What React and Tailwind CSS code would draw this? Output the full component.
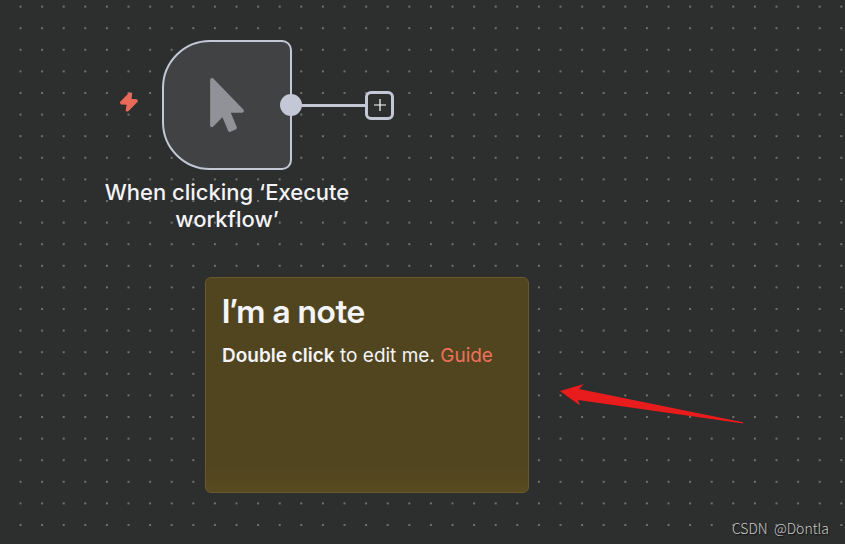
import React from 'react';
import { FaMousePointer } from 'react-icons/fa';

// Dotted grid behind everything on the canvas
const GridBackground = () => (
  <svg className="absolute inset-0 h-full w-full" aria-hidden="true">
    <defs>
      <pattern id="grid" x="9.7" y="-4.2" width="21.6" height="21.6" patternUnits="userSpaceOnUse">
        <circle cx="10.8" cy="10.8" r="0.9" fill="#8f9191" />
      </pattern>
    </defs>
    <rect width="100%" height="100%" fill="url(#grid)" />
  </svg>
);

const BoltIcon = () => (
  <svg className="h-5 w-[18px] text-[#ea6a5a]" viewBox="0 0 18 20" fill="currentColor" stroke="currentColor" strokeWidth="1.4" strokeLinejoin="round" aria-hidden="true">
    <path d="M9.600 1.200 0.700 10.300 1.200 11.700 7.400 12.100 6.300 18.600 7.600 18.900 17.200 9.300 16.700 8 10.800 7.500 11.500 1.500Z" />
  </svg>
);

const TriggerNode = ({ label }) => (
  <div className="absolute left-[97px] top-[40px] flex w-[260px] flex-col items-center">
    <div className="relative flex h-[130px] w-[130px] items-center justify-center rounded-l-[48px] rounded-r-[10px] border-2 border-[#c3c7d6] bg-[#414244]">
      <FaMousePointer className="h-[54px] w-[34px] text-[#919298]" />
      <div className="absolute right-full mr-[26px] pb-1.5">
        <BoltIcon />
      </div>

      {/* Output handle with the add button */}
      <div className="absolute left-full -ml-[10px] flex items-center">
        <span className="h-[22px] w-[22px] rounded-full bg-[#c3c7d6]"></span>
        <span className="h-[3px] w-[63px] bg-[#c3c7d6]"></span>
        <button
          title="Add node"
          className="flex h-[29px] w-[29px] items-center justify-center rounded-md border-3 border-[#c3c7d6] bg-[#2d2e2e] text-white"
        >
          <svg className="h-3 w-3" viewBox="0 0 12 12" fill="none" stroke="currentColor" strokeWidth="1.2">
            <path d="M6 0v12M0 6h12" />
          </svg>
        </button>
      </div>
    </div>
    <p className="mt-[9px] text-center text-[22px] leading-[27px] font-medium text-[#f3f4f8]">{label}</p>
  </div>
);

const StickyNote = () => (
  <div className="absolute left-[205px] top-[277px] h-[216px] w-[324px] rounded-md border border-[#6a592a] bg-linear-to-b from-[#514520] from-88% to-[#584a20] px-4 py-[13px] text-[#f3f4f8]">
    <h1 className="font-['Inter_Display','Inter',sans-serif] text-[33px] leading-[40px] font-semibold">I’m a note</h1>
    <p className="mt-3 text-[19px] leading-[26px]">
      <strong className="font-semibold">Double click</strong> to edit me.{' '}
      <a href="#guide" className="text-[#f0705a]">Guide</a>
    </p>
  </div>
);

const Arrow = () => (
  <svg className="absolute left-[560px] top-[383px] h-[42px] w-[184px]" viewBox="0 0 184 42" aria-hidden="true">
    <path d="M0 8 24 1 19 6 183 39.200V40.600L18 17 20 22.500Z" fill="#e81c1c" />
  </svg>
);

const App = () => {
  return (
    <main className="relative h-screen min-h-[544px] w-full overflow-hidden bg-[#2d2e2e] font-['Inter',sans-serif]">
      <GridBackground />
      <TriggerNode label="When clicking ‘Execute workflow’" />
      <StickyNote />
      <Arrow />
      <span className="absolute right-4 bottom-1.5 font-['Noto_Sans_CJK_SC',sans-serif] text-[14px] leading-5 font-light whitespace-pre text-[#c8c9c9] [text-shadow:1px_1px_1px_#111]">
        CSDN  @Dontla
      </span>
    </main>
  );
};

export default App;
